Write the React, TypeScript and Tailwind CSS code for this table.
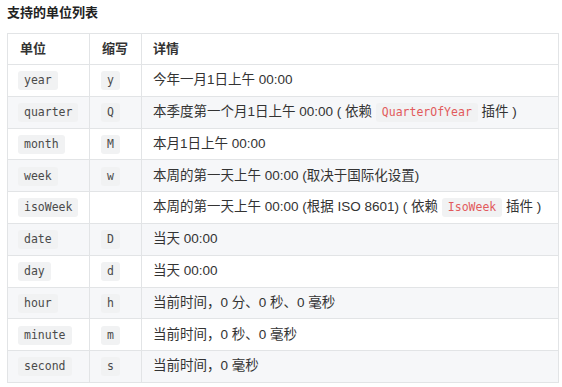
import React from 'react';

type Row = { unit: string; short: string; detail: React.ReactNode };

const Code = ({ children, red }: { children: React.ReactNode; red?: boolean }) => (
  <code
    className={`inline-block rounded-[3px] bg-[#f1f2f3] px-[6px] leading-[19px] text-[11.5px] ${red ? 'text-[#e25a5c]' : 'text-[#4a4a4a]'}`}
    style={{ fontFamily: '"DejaVu Sans Mono", "Liberation Mono", monospace' }}
  >
    {children}
  </code>
);

const ROWS: Row[] = [
  { unit: 'year', short: 'y', detail: '今年一月1日上午 00:00' },
  {
    unit: 'quarter',
    short: 'Q',
    detail: (
      <>
        本季度第一个月1日上午 00:00 ( 依赖 <Code red>QuarterOfYear</Code> 插件 )
      </>
    ),
  },
  { unit: 'month', short: 'M', detail: '本月1日上午 00:00' },
  { unit: 'week', short: 'w', detail: '本周的第一天上午 00:00 (取决于国际化设置)' },
  {
    unit: 'isoWeek',
    short: '',
    detail: (
      <>
        本周的第一天上午 00:00 (根据 ISO 8601) ( 依赖 <Code red>IsoWeek</Code> 插件 )
      </>
    ),
  },
  { unit: 'date', short: 'D', detail: '当天 00:00' },
  { unit: 'day', short: 'd', detail: '当天 00:00' },
  { unit: 'hour', short: 'h', detail: '当前时间，0 分、0 秒、0 毫秒' },
  { unit: 'minute', short: 'm', detail: '当前时间，0 秒、0 毫秒' },
  { unit: 'second', short: 's', detail: '当前时间，0 毫秒' },
];

export default function App() {
  return (
    <div
      className="w-[562px] h-[387px] bg-white px-[7px] pt-[5px] text-[#333]"
      style={{ fontFamily: '"Liberation Sans", "Noto Sans CJK SC", sans-serif' }}
    >
      <h3 className="text-[13px] font-bold leading-[16px] text-[#222]">支持的单位列表</h3>

      <table className="mt-[12px] w-[552px] border-collapse border border-[#e2e4e6] text-[13.5px]">
        <thead>
          <tr className="h-[31px] text-left text-[13px] font-bold">
            <th className="w-[82px] border border-[#e2e4e6] pl-[12px]">单位</th>
            <th className="w-[52px] border border-[#e2e4e6] pl-[12px]">缩写</th>
            <th className="border border-[#e2e4e6] pl-[11px]">详情</th>
          </tr>
        </thead>
        <tbody>
          {ROWS.map((r, i) => (
            <tr key={r.unit} className={`h-[31.8px] ${i % 2 === 1 ? 'bg-[#f6f7f9]' : 'bg-white'}`}>
              <td className="border border-[#e2e4e6] pl-[10px]">
                <Code>{r.unit}</Code>
              </td>
              <td className="border border-[#e2e4e6] pl-[11px]">{r.short && <Code>{r.short}</Code>}</td>
              <td className="border border-[#e2e4e6] pl-[11px] whitespace-nowrap">{r.detail}</td>
            </tr>
          ))}
        </tbody>
      </table>
    </div>
  );
}
